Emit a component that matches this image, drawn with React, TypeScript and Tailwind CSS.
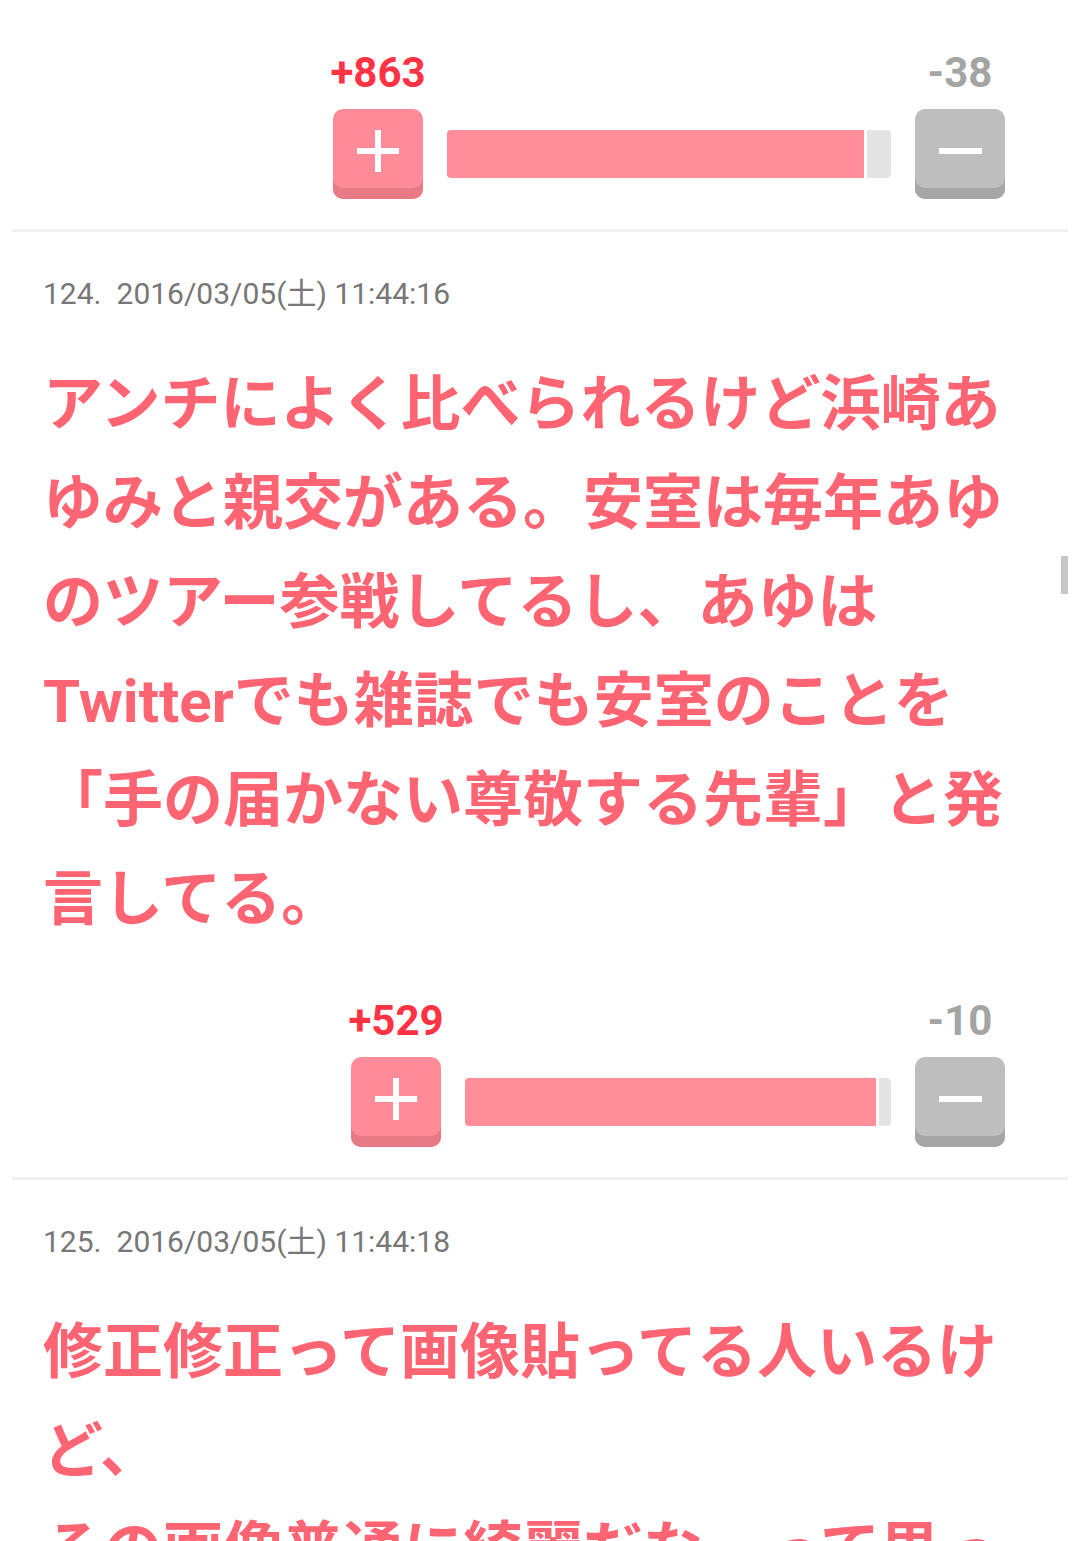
import React from "react";

type VoteProps = {
  plus: number;
  minus: number;
  width: string;
  fill: string;
  rest: string;
};

function PlusIcon() {
  return (
    <svg width="42" height="42" viewBox="0 0 42 42">
      <rect x="0" y="18" width="42" height="6" fill="#fff" />
      <rect x="18" y="0" width="6" height="42" fill="#fff" />
    </svg>
  );
}

function VoteBar({ plus, minus, width, fill, rest }: VoteProps) {
  return (
    <div className={`ml-auto mr-[75px] ${width}`}>
      <div className="flex justify-between font-['Roboto','Liberation_Sans',sans-serif] text-[42px] font-bold leading-[48px]">
        <div className="flex w-[90px] justify-center whitespace-nowrap text-[#ff3344]">
          +{plus}
        </div>
        <div className="flex w-[90px] justify-center whitespace-nowrap text-[#a4a4a4]">
          -{minus}
        </div>
      </div>
      <div className="mt-[12px] flex items-center">
        <div className="flex h-[90px] w-[90px] shrink-0 items-center justify-center rounded-[10px] bg-[#ff8b98] pb-[6px] shadow-[inset_0_-11px_0_#e87a86]">
          <PlusIcon />
        </div>
        <div className="mx-[24px] flex h-[48px] flex-1 gap-[3px]">
          <div className={`h-full rounded-l-[4px] bg-[#ff8e9a] ${fill}`} />
          <div className={`h-full rounded-r-[4px] bg-[#e4e4e4] ${rest}`} />
        </div>
        <div className="flex h-[90px] w-[90px] shrink-0 items-center justify-center rounded-[10px] bg-[#bebebe] pb-[6px] shadow-[inset_0_-11px_0_#a6a6a6]">
          <div className="h-[6px] w-[43px] bg-white" />
        </div>
      </div>
    </div>
  );
}

function Divider() {
  return <div className="mx-[12px] mt-[30px] h-[3px] bg-[#f1f1f1]" />;
}

function CommentHead({ no, date }: { no: number; date: string }) {
  return (
    <div className="mt-[42px] whitespace-nowrap pl-[43px] font-['Roboto','Noto_Sans_CJK_JP',sans-serif] text-[30px] leading-[40px] text-[#777777]">
      <span className="mr-[15px]">{no}.</span>
      {date}
    </div>
  );
}

function CommentBody({ text }: { text: string }) {
  return (
    <p className="mt-[41px] whitespace-pre-line px-[43px] font-['Roboto','Noto_Sans_CJK_JP',sans-serif] text-[60px] font-bold leading-[99px] text-[#ff6473]">
      {text}
    </p>
  );
}

export default function App() {
  return (
    <div className="relative w-[1080px] overflow-hidden bg-white pt-[49px]">
      <VoteBar plus={863} minus={38} width="w-[672px]" fill="w-[417px]" rest="w-[24px]" />
      <Divider />

      <CommentHead no={124} date="2016/03/05(土) 11:44:16" />
      <CommentBody text="アンチによく比べられるけど浜崎あゆみと親交がある。安室は毎年あゆのツアー参戦してるし、あゆはTwitterでも雑誌でも安室のことを「手の届かない尊敬する先輩」と発言してる。" />

      <div className="mt-[48px]">
        <VoteBar plus={529} minus={10} width="w-[654px]" fill="w-[411px]" rest="w-[12px]" />
      </div>
      <Divider />

      <CommentHead no={125} date="2016/03/05(土) 11:44:18" />
      <CommentBody
        text={"修正修正って画像貼ってる人いるけど、\nその画像普通に綺麗だなーって思ったけど…"}
      />

      {/* scroll indicator */}
      <div className="fixed left-[1061px] top-[556px] h-[38px] w-[7px] bg-[#c6c6c6]" />
    </div>
  );
}
